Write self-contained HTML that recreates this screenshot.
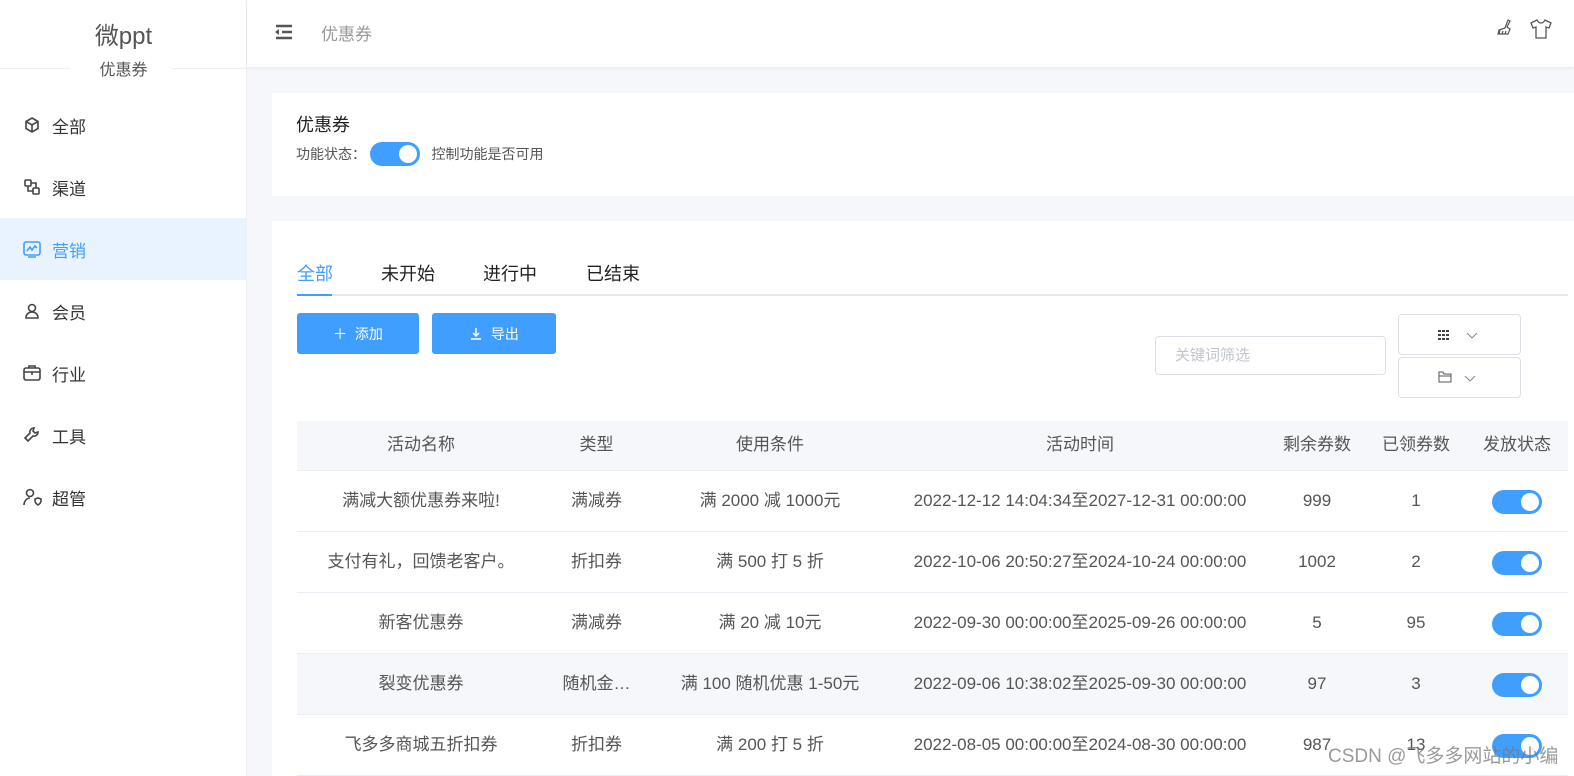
<!DOCTYPE html>
<html><head><meta charset="utf-8"><style>
*{box-sizing:border-box;margin:0;padding:0}
body{width:1574px;height:776px;overflow:hidden;background:#f5f7fa;font-family:"Liberation Sans","Noto Sans CJK SC",sans-serif;color:#333;position:relative}
.side{position:absolute;left:0;top:0;width:247px;height:776px;background:#fff;border-right:1px solid #eee}
.logo{position:absolute;left:0;top:16px;width:247px;text-align:center;font-size:24px;color:#555}
.sub{position:absolute;left:0;top:56px;width:247px;text-align:center;font-size:16px;color:#555}
.hline{position:absolute;top:68px;height:1px;background:#eee}
.mi{position:absolute;left:0;width:247px;height:62px;display:flex;align-items:center;padding-left:22px;font-size:17px;color:#333}
.mi svg{width:20px;height:20px;margin-right:10px;fill:none;stroke:#444;stroke-width:1.6}
.mi.act{background:#e8f3ff;color:#409eff}
.mi.act svg{stroke:#409eff}
.top{position:absolute;left:247px;top:0;right:0;height:67px;background:#fff;box-shadow:0 1px 4px rgba(0,0,0,.06)}
.card{position:absolute;background:#fff}
.sw{display:inline-block;width:50px;height:24px;border-radius:12px;background:#409eff;position:relative;vertical-align:middle}
.sw:after{content:"";position:absolute;right:3px;top:3px;width:18px;height:18px;border-radius:50%;background:#fff}
.tab{position:absolute;top:260px;font-size:18px;color:#222}
.btn{position:absolute;top:313px;height:41px;background:#409eff;border-radius:3px;color:#fff;font-size:14px;display:flex;align-items:center;justify-content:center}
.row{position:absolute;left:297px;width:1271px;height:61px;border-bottom:1px solid #ebeef5;font-size:17px;color:#555}
.row div{position:absolute;top:0;height:60px;line-height:60px;text-align:center;white-space:nowrap}
.c1{left:0;width:248px}.c2{left:248px;width:103px}.c3{left:351px;width:244px}.c4{left:595px;width:376px}.c5{left:971px;width:98px}.c6{left:1069px;width:100px}.c7{left:1169px;width:102px}
.ibox{position:absolute;border:1px solid #dcdfe6;border-radius:4px;background:#fff}
</style></head><body>
<div class="side">
<div class="logo">微ppt</div>
<div class="sub">优惠券</div>
<div class="hline" style="left:0;width:70px"></div><div class="hline" style="left:172px;width:75px"></div>
<div class="mi" style="top:94px"><svg viewBox="0 0 20 20"><path d="M10 3l6 3.5v7L10 17l-6-3.5v-7z M4 6.5l6 3.5 6-3.5 M10 10v7"/></svg>全部</div>
<div class="mi" style="top:156px"><svg viewBox="0 0 20 20"><rect x="3" y="3" width="6" height="6" rx="1"/><rect x="11" y="11" width="6" height="6" rx="1"/><path d="M6 9v5h5 M9 6h5v5"/></svg>渠道</div>
<div class="mi act" style="top:218px"><svg viewBox="0 0 20 20"><rect x="2" y="3" width="16" height="13" rx="2"/><path d="M5 12l3-4 2 3 3-4 2 2 M6 18h8"/></svg>营销</div>
<div class="mi" style="top:280px"><svg viewBox="0 0 20 20"><circle cx="10" cy="7" r="3.5"/><path d="M4 17c0-4 3-6 6-6s6 2 6 6z"/></svg>会员</div>
<div class="mi" style="top:342px"><svg viewBox="0 0 20 20"><rect x="2" y="5" width="16" height="12" rx="2"/><path d="M7 5V3h6v2 M2 9h16 M10 9v3"/></svg>行业</div>
<div class="mi" style="top:404px"><svg viewBox="0 0 20 20"><path d="M12 3a4 4 0 0 0-4 5L3 13l3 3 5-5a4 4 0 0 0 5-4l-3 1-2-2z"/></svg>工具</div>
<div class="mi" style="top:466px"><svg viewBox="0 0 20 20"><circle cx="8" cy="6" r="3.5"/><path d="M2 18c0-4 3-7 6-7 M13 12l3-1 3 1v2c0 2-1.5 3-3 4-1.5-1-3-2-3-4z"/></svg>超管</div>
</div>
<div class="top">
<svg style="position:absolute;left:27px;top:23px" width="20" height="18" viewBox="0 0 20 18"><path d="M2 3h16M8 9h10M2 15h16" stroke="#555" stroke-width="2.4"/><path d="M1 9l4-3v6z" fill="#555"/></svg>
<div style="position:absolute;left:74px;top:20px;font-size:17px;color:#999">优惠券</div>
<svg style="position:absolute;left:1247px;top:17px" width="22" height="22" viewBox="0 0 22 22" fill="none" stroke="#555" stroke-width="1.2"><path d="M14 3l2 1-3 6 3 2-2 5H4l1-4 6-2z M6 13l-1 4 M9 14l-1 3 M12 14l-1 3"/></svg>
<svg style="position:absolute;left:1282px;top:17px" width="24" height="24" viewBox="0 0 24 24" fill="none" stroke="#555" stroke-width="1.3"><path d="M8 3l-6 3 2 5 3-1v11h10V10l3 1 2-5-6-3c-1 2-2 3-4 3s-3-1-4-3z"/></svg>
</div>
<div class="card" style="left:272px;top:93px;width:1302px;height:103px">
<div style="position:absolute;left:24px;top:18px;font-size:18px;color:#222">优惠券</div>
<div style="position:absolute;left:24px;top:49px;font-size:14px;color:#555;line-height:24px">功能状态：&nbsp;<span class="sw" style="margin-top:-2px"></span>&nbsp;&nbsp;&nbsp;控制功能是否可用</div>
</div>
<div class="card" style="left:272px;top:221px;width:1302px;height:555px"></div>
<div class="tab" style="left:297px;color:#409eff">全部</div>
<div class="tab" style="left:381px">未开始</div>
<div class="tab" style="left:483px">进行中</div>
<div class="tab" style="left:586px">已结束</div>
<div style="position:absolute;left:297px;top:294px;width:1271px;height:2px;background:#e4e7ed"></div>
<div style="position:absolute;left:297px;top:294px;width:35px;height:2px;background:#409eff"></div>
<div class="btn" style="left:297px;width:122px">＋&nbsp;&nbsp;添加</div>
<div class="btn" style="left:432px;width:124px"><svg width="14" height="14" viewBox="0 0 14 14" fill="none" stroke="#fff" stroke-width="1.4"><path d="M7 1v8M4 6l3 3 3-3M2 12h10"/></svg>&nbsp;&nbsp;导出</div>
<div class="ibox" style="left:1155px;top:336px;width:231px;height:39px;font-size:15px;color:#c0c4cc;line-height:37px;padding-left:19px">关键词筛选</div>
<div class="ibox" style="left:1398px;top:314px;width:123px;height:41px"><svg style="position:absolute;left:39px;top:15px" width="12" height="10" viewBox="0 0 12 10" fill="#444"><rect x="0" y="0" width="3" height="2"/><rect x="4" y="0" width="3" height="2"/><rect x="8" y="0" width="3" height="2"/><rect x="0" y="4" width="3" height="2"/><rect x="4" y="4" width="3" height="2"/><rect x="8" y="4" width="3" height="2"/><rect x="0" y="8" width="3" height="2"/><rect x="4" y="8" width="3" height="2"/><rect x="8" y="8" width="3" height="2"/></svg><svg style="position:absolute;left:67px;top:17px" width="12" height="8" viewBox="0 0 12 8" fill="none" stroke="#888"><path d="M1 1l5 5 5-5"/></svg></div>
<div class="ibox" style="left:1398px;top:357px;width:123px;height:41px"><svg style="position:absolute;left:39px;top:13px" width="14" height="12" viewBox="0 0 14 12" fill="none" stroke="#555"><path d="M1 1h4l1 2h7v8H1z M1 5h12"/></svg><svg style="position:absolute;left:65px;top:17px" width="12" height="8" viewBox="0 0 12 8" fill="none" stroke="#888"><path d="M1 1l5 5 5-5"/></svg></div>
<div class="row" style="top:421px;height:50px;background:#f5f7fa;color:#555"><div class="c1" style="height:50px;line-height:48px">活动名称</div><div class="c2" style="height:50px;line-height:48px">类型</div><div class="c3" style="height:50px;line-height:48px">使用条件</div><div class="c4" style="height:50px;line-height:48px">活动时间</div><div class="c5" style="height:50px;line-height:48px">剩余券数</div><div class="c6" style="height:50px;line-height:48px">已领券数</div><div class="c7" style="height:50px;line-height:48px">发放状态</div></div>
<div class="row" style="top:471px"><div class="c1">满减大额优惠券来啦!</div><div class="c2">满减券</div><div class="c3">满 2000 减 1000元</div><div class="c4">2022-12-12 14:04:34至2027-12-31 00:00:00</div><div class="c5">999</div><div class="c6">1</div><div class="c7"><span class="sw"></span></div></div>
<div class="row" style="top:532px"><div class="c1">支付有礼，回馈老客户。</div><div class="c2">折扣券</div><div class="c3">满 500 打 5 折</div><div class="c4">2022-10-06 20:50:27至2024-10-24 00:00:00</div><div class="c5">1002</div><div class="c6">2</div><div class="c7"><span class="sw"></span></div></div>
<div class="row" style="top:593px"><div class="c1">新客优惠券</div><div class="c2">满减券</div><div class="c3">满 20 减 10元</div><div class="c4">2022-09-30 00:00:00至2025-09-26 00:00:00</div><div class="c5">5</div><div class="c6">95</div><div class="c7"><span class="sw"></span></div></div>
<div class="row" style="top:654px;background:#f5f7fa"><div class="c1">裂变优惠券</div><div class="c2">随机金…</div><div class="c3">满 100 随机优惠 1-50元</div><div class="c4">2022-09-06 10:38:02至2025-09-30 00:00:00</div><div class="c5">97</div><div class="c6">3</div><div class="c7"><span class="sw"></span></div></div>
<div class="row" style="top:715px"><div class="c1">飞多多商城五折扣券</div><div class="c2">折扣券</div><div class="c3">满 200 打 5 折</div><div class="c4">2022-08-05 00:00:00至2024-08-30 00:00:00</div><div class="c5">987</div><div class="c6">13</div><div class="c7"><span class="sw"></span></div></div>
<div style="position:absolute;left:1328px;top:741px;font-size:19px;color:rgba(120,120,120,.75)">CSDN @飞多多网站的小编</div>
</body></html>
